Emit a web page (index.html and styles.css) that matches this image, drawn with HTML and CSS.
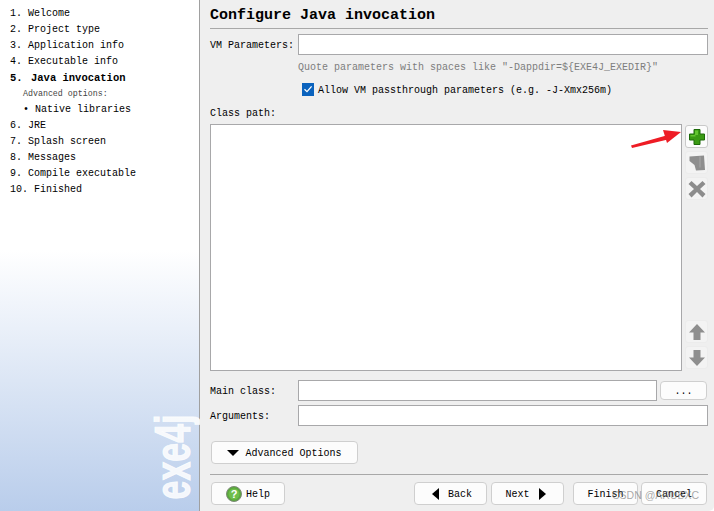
FILE: index.html
```html
<!DOCTYPE html>
<html lang="en">
<head>
<meta charset="utf-8">
<title>Configure Java invocation</title>
<link rel="stylesheet" href="styles.css">
</head>
<body>
<div class="window">
  <aside class="sidebar">
    <ol class="steps">
      <li><span class="num">1.</span>Welcome</li>
      <li><span class="num">2.</span>Project type</li>
      <li><span class="num">3.</span>Application info</li>
      <li><span class="num">4.</span>Executable info</li>
      <li class="current"><span class="num">5.</span>Java invocation</li>
      <li class="sub-title">Advanced options:</li>
      <li class="sub-item"><span class="dot">•</span>Native libraries</li>
      <li><span class="num">6.</span>JRE</li>
      <li><span class="num">7.</span>Splash screen</li>
      <li><span class="num">8.</span>Messages</li>
      <li><span class="num">9.</span>Compile executable</li>
      <li><span class="num wide">10.</span>Finished</li>
    </ol>
    <div class="logo">exe4j</div>
  </aside>
  <main class="main">
    <h1 class="title">Configure Java invocation</h1>
    <div class="row vm-row">
      <label class="label">VM Parameters:</label>
      <div class="input"></div>
    </div>
    <p class="hint">Quote parameters with spaces like "-Dappdir=${EXE4J_EXEDIR}"</p>
    <div class="check-row">
      <span class="checkbox"><svg viewBox="0 0 12 12" width="12" height="12"><path d="M2.5 6.2 5 8.6 9.6 3.4" fill="none" stroke="#fff" stroke-width="1.3"/></svg></span>
      <span class="check-text">Allow VM passthrough parameters (e.g. -J-Xmx256m)</span>
    </div>
    <div class="cp-label">Class path:</div>
    <div class="cp-row">
      <div class="cp-list"></div>
      <div class="tools">
        <button class="tool active"><svg viewBox="0 0 20 20" width="20" height="20"><path d="M7 2.500h6v4.500h4.500v6H13v4.500H7V13H2.500V7H7z" fill="#3a9a12" stroke="#1c6a08" stroke-width="1"/><path d="M8 3.500h3v4.500h-3zM3.500 8h5v1.500h-5z" fill="#63c52f"/></svg></button>
        <button class="tool"><svg viewBox="0 0 20 20" width="20" height="20"><path d="M2.500 3.500 17 2.500 18 17 9 17.500 7.500 12 2.500 8z" fill="#8e8e8e"/><path d="M13 3.500v11" stroke="#a8a8a8" stroke-width="1"/></svg></button>
        <button class="tool"><svg viewBox="0 0 20 20" width="20" height="20"><path d="M4.500 2 10 7 15.500 2 18.500 5 13 10 18.500 15 15.500 18.500 10 13 4.500 18.500 1.500 15 7 10 1.500 5z" fill="#8c8c8c"/></svg></button>
        <div class="tools-gap"></div>
        <button class="tool"><svg viewBox="0 0 20 20" width="20" height="20"><path d="M10 2 18 10.500H13.500V18H6.500V10.500H2z" fill="#8e8e8e"/></svg></button>
        <button class="tool"><svg viewBox="0 0 20 20" width="20" height="20"><path d="M10 18 18 9.500H13.500V2H6.500V9.500H2z" fill="#8e8e8e"/></svg></button>
      </div>
    </div>
    <div class="row main-class-row">
      <label class="label">Main class:</label>
      <div class="input"></div>
      <button class="btn dots">...</button>
    </div>
    <div class="row args-row">
      <label class="label">Arguments:</label>
      <div class="input"></div>
    </div>
    <button class="btn advanced"><span class="tri-down"></span>Advanced Options</button>
    <div class="footer">
      <button class="btn help"><svg viewBox="0 0 16 16" width="16" height="16"><circle cx="8" cy="8" r="7.500" fill="#5aa83c" stroke="#7d8a78"/><circle cx="8" cy="8" r="5.500" fill="#6fbe4a"/><text x="8" y="12" text-anchor="middle" class="q">?</text></svg>Help</button>
      <div class="spacer"></div>
      <button class="btn nav back"><span class="tri-left"></span>Back</button>
      <button class="btn nav next">Next<span class="tri-right"></span></button>
      <button class="btn finish">Finish</button>
      <button class="btn cancel">Cancel</button>
    </div>
    <svg class="arrow" viewBox="0 0 54 20" width="54" height="20"><path d="M1 17.500 38 7 40 11 2 20z" fill="#ee1c25"/><path d="M33 2 51 4 37 15z" fill="#ee1c25"/></svg>
    <div class="watermark">CSDN @ARUBXC</div>
  </main>
</div>
</body>
</html>
```
FILE: styles.css
```css
* { box-sizing: border-box; }
html, body { margin: 0; padding: 0; }
body {
  width: 714px;
  height: 511px;
  overflow: hidden;
  font: 10px/16px "Liberation Mono", monospace;
  color: #000;
}
.window { display: flex; width: 714px; height: 511px; background: #fff; }
.sidebar {
  position: relative;
  flex: 0 0 200px;
  height: 511px;
  border-right: 1px solid #a0a0a0;
  background: linear-gradient(to bottom, #fff 0, #fff 250px, #b9cdeb 511px);
}
.steps { list-style: none; margin: 0; padding: 6px 0 0 10px; }
.steps li { height: 16px; white-space: nowrap; }
.num { display: inline-block; width: 18px; }
.num.wide { width: 24px; }
.current { font-weight: bold; font-size: 10.500px; }
.current .num { width: 21px; }
.steps .sub-title { font-size: 8.300px; color: #444; padding-left: 13px; }
.steps .sub-item { padding-left: 13px; }
.dot { display: inline-block; width: 12px; }
.logo {
  position: absolute;
  left: 148px;
  top: 392px;
  width: 50px;
  height: 128px;
  writing-mode: vertical-rl;
  transform: rotate(180deg) scaleY(0.68);
  transform-origin: center center;
  font: bold 50px/50px "Liberation Sans", sans-serif;
  -webkit-text-stroke: 1px rgba(255, 255, 255, 0.85);
  text-align: left;
  white-space: nowrap;
  color: rgba(255, 255, 255, 0.85);
}
.main {
  position: relative;
  flex: 1;
  height: 511px;
  padding: 0 6px 0 10px;
  background: #efefef;
  border-bottom-right-radius: 5px;
}
.title {
  margin: 0;
  height: 29px;
  padding-top: 7px;
  font: bold 15px/17px "Liberation Mono", monospace;
  border-bottom: 1px solid #a8a8a8;
}
.row { display: flex; align-items: center; }
.label { flex: 0 0 88px; padding-top: 2px; white-space: nowrap; }
.input { flex: 1; height: 21px; background: #fff; border: 1px solid #a8a8aa; }
.vm-row { margin-top: 5px; }
.hint { margin: 5px 0 0 88px; height: 15px; color: #7d7d7d; white-space: nowrap; }
.check-row { display: flex; align-items: center; height: 16px; margin: 7px 0 0 92px; gap: 4px; white-space: nowrap; }
.checkbox { display: block; align-self: flex-start; margin-top: 1px; width: 12px; height: 13px; background: #0a62bd; }
.checkbox svg { display: block; }
.check-text { padding-top: 2px; }
.cp-label { margin-top: 7px; height: 16px; padding-top: 1px; }
.cp-row { display: flex; height: 247px; margin-top: 3px; }
.cp-list { width: 472px; height: 247px; background: #fff; border: 1px solid #a8a8aa; }
.tools { display: flex; flex-direction: column; gap: 3px; margin-left: 3px; width: 23px; padding: 1px 0 2px; }
.tools-gap { flex: 1; }
.tool {
  display: flex;
  align-items: center;
  justify-content: center;
  width: 23px;
  height: 23px;
  padding: 0;
  background: #f3f3f3;
  border: 1px solid #ececec;
  border-radius: 3px;
}
.tool.active { background: #fcfcfc; border-color: #c9c9c9; }
.btn {
  display: inline-flex;
  align-items: center;
  justify-content: center;
  height: 23px;
  padding: 2px 0 0;
  font: inherit;
  color: #000;
  background: #fcfcfc;
  border: 1px solid #cfcfcf;
  border-radius: 4px;
  white-space: nowrap;
}
.main-class-row { margin-top: 9px; }
.dots { flex: 0 0 47px; height: 19px; margin-left: 3px; margin-right: 1px; }
.args-row { margin-top: 4px; }
.advanced { display: flex; width: 147px; margin: 15px 0 0 1px; gap: 6px; }
.tri-down { width: 0; height: 0; margin-top: -2px; border-style: solid; border-width: 6px 6px 0; border-color: #000 transparent transparent; }
.tri-left { width: 0; height: 0; margin-top: -2px; border-style: solid; border-width: 6px 7px 6px 0; border-color: transparent #000 transparent transparent; margin-right: 9px; }
.tri-right { width: 0; height: 0; margin-top: -2px; border-style: solid; border-width: 6px 0 6px 7px; border-color: transparent transparent transparent #000; margin-left: 9px; }
.footer {
  display: flex;
  margin-top: 10px;
  padding: 7px 1px 0;
  height: 31px;
  border-top: 1px solid #a8a8a8;
}
.help { width: 74px; gap: 4px; }
.help svg { margin-top: -2px; }
.q { font: bold 11px "Liberation Sans", sans-serif; fill: #fff; }
.spacer { flex: 1; }
.nav { width: 73px; }
.back { padding-left: 3px; }
.next { margin-left: 4px; padding-right: 4px; }
.finish { width: 65px; margin-left: 9px; }
.cancel { width: 66px; margin-left: 3px; }
.arrow { position: absolute; left: 430px; top: 128px; }
.watermark {
  position: absolute;
  left: 412px;
  top: 488px;
  font: 10.500px/14px "Liberation Sans", sans-serif;
  color: rgba(110, 110, 110, 0.6);
  white-space: nowrap;
}
```
